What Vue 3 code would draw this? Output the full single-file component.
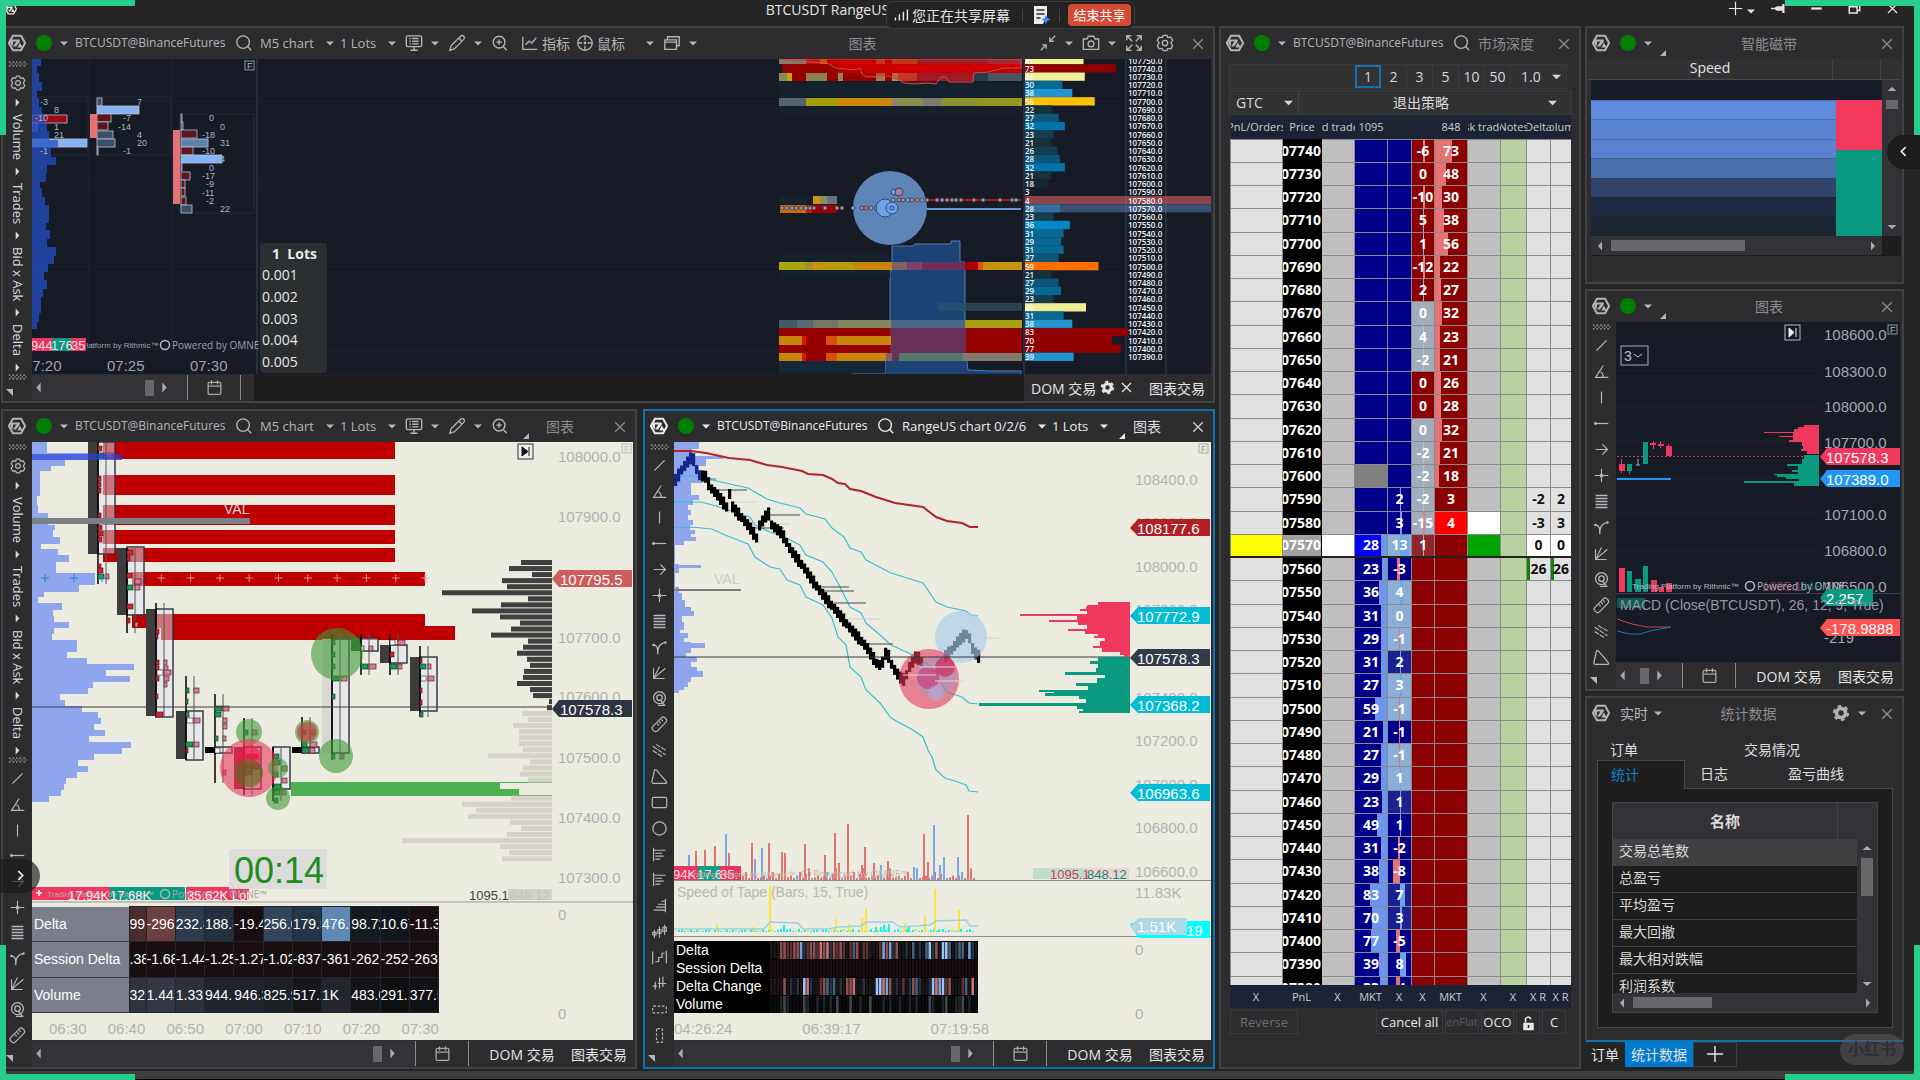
<template>
  <div class="app">
    <svg class="defs" aria-hidden="true">
      <symbol id="i-logo" viewBox="0 0 20 20"><path d="M5.5 2h9L19 10l-4.500 8h-9L1 10z" fill="none" stroke="currentColor" stroke-width="2.2" /><path d="M2 6h3.500v7.500L3 11zM5 6h8v2.200L9 14H5.500L9.500 8.200H5zM13 9.500l3.500 5.500h-6z" fill="currentColor" /></symbol>
      <symbol id="i-caret" viewBox="0 0 10 10"><path d="M0 3h10L5 8z" fill="currentColor" /></symbol>
      <symbol id="i-left" viewBox="0 0 10 10"><path d="M7 .5v9L3 5z" fill="currentColor" /></symbol>
      <symbol id="i-right" viewBox="0 0 10 10"><path d="M3 .5v9L7 5z" fill="currentColor" /></symbol>
      <symbol id="i-up" viewBox="0 0 10 10"><path d="M.5 7h9L5 3z" fill="currentColor" /></symbol>
      <symbol id="i-down" viewBox="0 0 10 10"><path d="M.5 3h9L5 7z" fill="currentColor" /></symbol>
      <symbol id="i-corner" viewBox="0 0 8 8"><path d="M8 0v8H0z" fill="currentColor" /></symbol>
      <symbol id="i-cornerdown" viewBox="0 0 8 8"><path d="M0 0h8v8z" fill="currentColor" /></symbol>
      <symbol id="i-search" viewBox="0 0 20 20"><circle cx="9" cy="9" r="7" fill="none" stroke="currentColor" stroke-width="1.5" /><path d="M14 14l4 4" stroke="currentColor" stroke-width="1.5" /></symbol>
      <symbol id="i-zoom" viewBox="0 0 20 20"><circle cx="9" cy="9" r="6.5" fill="none" stroke="currentColor" stroke-width="1.5" /><path d="M13.5 14l4 4M9 6v6M6 9h6" stroke="currentColor" stroke-width="1.6" /></symbol>
      <symbol id="i-monitor" viewBox="0 0 20 20"><rect x="1.5" y="2" width="17" height="12" rx="1.5" fill="none" stroke="currentColor" stroke-width="1.5" /><path d="M5 5h1.5M8 5h7M5 8h1.5M8 8h7M5 11h1.5M8 11h7M10 14v4M6 18h8" stroke="currentColor" stroke-width="1.5" /></symbol>
      <symbol id="i-pencil" viewBox="0 0 20 20"><path d="M2 18l1.500-5L14 2.500a2 2 0 0 1 3.500 3.500L7 16.500zM12 4.500l3.500 3.500" fill="none" stroke="currentColor" stroke-width="1.4" /></symbol>
      <symbol id="i-line" viewBox="0 0 20 20"><path d="M2 3v14h16M5 12l4-4 3 2 5-6" fill="none" stroke="currentColor" stroke-width="1.5" /></symbol>
      <symbol id="i-target" viewBox="0 0 20 20"><circle cx="10" cy="10" r="8" fill="none" stroke="currentColor" stroke-width="1.5" /><circle cx="10" cy="10" r="1.6" fill="currentColor" /><path d="M10 2v5M10 13v5M2 10h5M13 10h5" stroke="currentColor" stroke-width="1.5" /></symbol>
      <symbol id="i-windows" viewBox="0 0 20 20"><path d="M5 6V3h13v10h-3M2 6.500h13V17H2zM2 9h13" fill="none" stroke="currentColor" stroke-width="1.5" /></symbol>
      <symbol id="i-shrink" viewBox="0 0 20 20"><path d="M18 2l-6 6M12 3.500V8h4.500M2 18l6-6M3.500 12H8v4.500" fill="none" stroke="currentColor" stroke-width="1.5" /></symbol>
      <symbol id="i-expand" viewBox="0 0 20 20"><path d="M2 7V2h5M2 2l6 6M18 7V2h-5M18 2l-6 6M2 13v5h5M2 18l6-6M18 13v5h-5M18 18l-6-6" fill="none" stroke="currentColor" stroke-width="1.6" /></symbol>
      <symbol id="i-camera" viewBox="0 0 20 20"><path d="M1.500 5.500h4l1.500-3h6l1.500 3h4V17h-17z" fill="none" stroke="currentColor" stroke-width="1.5" /><circle cx="10" cy="11" r="3.2" fill="none" stroke="currentColor" stroke-width="1.5" /></symbol>
      <symbol id="i-gear" viewBox="0 0 20 20"><path d="M8 1.500h4l1 2.500 3.500-.5 2 3.500-2 3 2 3-2 3.500-3.500-.5-1 2.500H8L7 16l-3.500.5-2-3.500 2-3-2-3 2-3.500L7 4z" fill="none" stroke="currentColor" stroke-width="1.5" stroke-linejoin="round" /><circle cx="10" cy="10" r="3" fill="none" stroke="currentColor" stroke-width="1.5" /></symbol>
      <symbol id="i-cog" viewBox="0 0 20 20"><circle cx="10" cy="10" r="5" fill="none" stroke="currentColor" stroke-width="4" /><circle cx="10" cy="10" r="7.5" fill="none" stroke="currentColor" stroke-width="3" stroke-dasharray="3.9 3.95" /></symbol>
      <symbol id="i-close" viewBox="0 0 20 20"><path d="M4 4l12 12M16 4L4 16" stroke="currentColor" stroke-width="1.7" /></symbol>
      <symbol id="i-cal" viewBox="0 0 20 20"><rect x="2.5" y="4" width="15" height="14" rx="1.5" fill="none" stroke="currentColor" stroke-width="1.5" /><path d="M2.500 8.500h15M6.500 1.500v5M13.500 1.500v5" stroke="currentColor" stroke-width="1.5" /></symbol>
      <symbol id="i-lock" viewBox="0 0 20 20"><rect x="3" y="9" width="14" height="10" rx="1" fill="currentColor" /><path d="M6 9V5.500a3.500 3.500 0 0 1 7-1" fill="none" stroke="currentColor" stroke-width="2" /><path d="M10 12v4" stroke="#222" stroke-width="2" /></symbol>
      <symbol id="i-plus" viewBox="0 0 20 20"><path d="M10 1v18M1 10h18" stroke="currentColor" stroke-width="1.6" /></symbol>
      <symbol id="i-pin" viewBox="0 0 20 20"><path d="M0 10h7" stroke="currentColor" stroke-width="1.8" /><path d="M5 9l3-2h7V4h3v12h-3v-3H8l-3-2z" fill="currentColor" /></symbol>
      <symbol id="i-min" viewBox="0 0 20 20"><path d="M3 10h14" stroke="currentColor" stroke-width="3" /></symbol>
      <symbol id="i-restore" viewBox="0 0 20 20"><path d="M7 7V3.500h10v9h-3.500M3 7.500h10.500V16H3z" fill="none" stroke="currentColor" stroke-width="2" /></symbol>
      <symbol id="i-note" viewBox="0 0 20 20"><path d="M3 1h13v10l-4 8H3z" fill="#e8ecef" /><path d="M5.500 5h8M5.500 9h8M5.500 13h4" stroke="#2b2b2b" stroke-width="1.6" /><path d="M15 10l1.400 3.100L19.500 14.500l-3.100 1.400L15 19l-1.400-3.100L10.500 14.500l3.100-1.400z" fill="#3d8bff" /></symbol>
      <symbol id="i-signal" viewBox="0 0 20 20"><path d="M3 17v-4M8 17V9M13 17V6M18 17V3" stroke="currentColor" stroke-width="1.8" /></symbol>
      <symbol id="r-trend" viewBox="0 0 20 20"><path d="M4 16L16 4" stroke="currentColor" stroke-width="1.4" /></symbol>
      <symbol id="r-angle" viewBox="0 0 20 20"><path d="M12 3L3 17h15M7 10c3 0 5 3 5 7" fill="none" stroke="currentColor" stroke-width="1.4" /></symbol>
      <symbol id="r-vert" viewBox="0 0 20 20"><path d="M10 3v14" stroke="currentColor" stroke-width="1.4" /></symbol>
      <symbol id="r-horz" viewBox="0 0 20 20"><path d="M2 10h16" stroke="currentColor" stroke-width="1.4" /><circle cx="3" cy="10" r="1.7" fill="currentColor" /></symbol>
      <symbol id="r-arrow" viewBox="0 0 20 20"><path d="M3 10h14M11 4l6 6-6 6" fill="none" stroke="currentColor" stroke-width="1.4" /></symbol>
      <symbol id="r-cross" viewBox="0 0 20 20"><path d="M10 2v16M2 10h16" stroke="currentColor" stroke-width="1.4" /><circle cx="10" cy="10" r="2.2" fill="currentColor" /></symbol>
      <symbol id="r-levels" viewBox="0 0 20 20"><path d="M3 3h14M3 6.500h14M3 10h14M3 13.500h14M3 17h14" stroke="currentColor" stroke-width="1.7" /></symbol>
      <symbol id="r-fork" viewBox="0 0 20 20"><path d="M2 7c5 0 6 3 6 11M8 15c0-7 4-10 9-11" fill="none" stroke="currentColor" stroke-width="1.5" /><circle cx="17" cy="4" r="1.5" fill="currentColor" /><circle cx="3" cy="7" r="1.5" fill="currentColor" /></symbol>
      <symbol id="r-fan" viewBox="0 0 20 20"><path d="M3 5v12h13M3 17L17 5M3 17L10 3" fill="none" stroke="currentColor" stroke-width="1.3" /></symbol>
      <symbol id="r-disc" viewBox="0 0 20 20"><circle cx="10" cy="9" r="7" fill="none" stroke="currentColor" stroke-width="1.5" /><circle cx="10" cy="9" r="3.2" fill="none" stroke="currentColor" stroke-width="1.5" /><path d="M11 12l5 6M8 18h9" stroke="currentColor" stroke-width="1.5" /></symbol>
      <symbol id="r-ruler" viewBox="0 0 20 20"><rect x="6" y="0" width="7.5" height="20" rx="3" transform="rotate(45 10 10)" fill="none" stroke="currentColor" stroke-width="1.4" /><path d="M7 9l2 2M9.500 6.500l2 2M12 4l2 2" stroke="currentColor" stroke-width="1.4" /></symbol>
      <symbol id="r-channel" viewBox="0 0 20 20"><path d="M6 3l12 7M2 5l15 10M2 10l11 7" stroke="currentColor" stroke-width="1.3" stroke-dasharray="6 1" /></symbol>
      <symbol id="r-tri" viewBox="0 0 20 20"><path d="M4 3q1-2 3 0l11 13q1 2-1 2H3q-2 0-2-2z" fill="none" stroke="currentColor" stroke-width="1.4" /></symbol>
      <symbol id="r-rect" viewBox="0 0 20 20"><rect x="1.5" y="4" width="17" height="12" rx="2" fill="none" stroke="currentColor" stroke-width="1.4" /></symbol>
      <symbol id="r-circle" viewBox="0 0 20 20"><circle cx="10" cy="10" r="7.8" fill="none" stroke="currentColor" stroke-width="1.4" /></symbol>
      <symbol id="r-prof" viewBox="0 0 20 20"><path d="M3 2v16M3 5h14M5 8.500h8M5 12h10M5 15.500h6" stroke="currentColor" stroke-width="1.4" /></symbol>
      <symbol id="r-prof2" viewBox="0 0 20 20"><path d="M17 2v16M17 5h-5M17 8.500H8M17 12H6M17 15.500H3" stroke="currentColor" stroke-width="1.4" /></symbol>
      <symbol id="r-candles" viewBox="0 0 20 20"><path d="M4 8v10M10 4v13M16 2v12M2 11h4v3H2zM8 8h4v4H8zM14 5h4v5h-4z" fill="none" stroke="currentColor" stroke-width="1.3" /></symbol>
      <symbol id="r-steps" viewBox="0 0 20 20"><path d="M2 3v15M18 2v15M5 15h4v-5h4V5h3" fill="none" stroke="currentColor" stroke-width="1.4" /></symbol>
      <symbol id="r-ticks" viewBox="0 0 20 20"><path d="M5 8v9M10 3v13M14 2v12M2 13h5M8 10h10" stroke="currentColor" stroke-width="1.4" /></symbol>
      <symbol id="r-dashh" viewBox="0 0 20 20"><rect x="2" y="6" width="16" height="8" rx="1" fill="none" stroke="currentColor" stroke-width="1.4" stroke-dasharray="3 2" /></symbol>
      <symbol id="r-dashv" viewBox="0 0 20 20"><rect x="6.5" y="2" width="7" height="16" rx="1" fill="none" stroke="currentColor" stroke-width="1.4" stroke-dasharray="3 2" /></symbol>
      <symbol id="r-grip" viewBox="0 0 22 6"><path d="M1 1h20M1 5h20" stroke="currentColor" stroke-width="1.3" stroke-dasharray="1.5 2.5" /><path d="M3 3h18" stroke="currentColor" stroke-width="1.3" stroke-dasharray="1.5 2.5" /></symbol>
    </svg>

    <header class="titlebar">
      <svg class="appicon"><use href="#i-logo" /></svg>
      <span class="wintitle">BTCUSDT RangeUS</span>
      <div class="wincontrols">
        <button aria-label="add"><svg><use href="#i-plus" /></svg></button>
        <button class="mini" aria-label="more"><svg><use href="#i-caret" /></svg></button>
        <button v-for="n in ['pin', 'min', 'restore', 'close']" :key="n" :aria-label="n"><svg><use :href="'#i-' + n" /></svg></button>
      </div>
      <div class="share">
        <svg class="signal"><use href="#i-signal" /></svg>
        <span>您正在共享屏幕</span>
        <i></i>
        <svg class="note"><use href="#i-note" /></svg>
        <i></i>
        <button>结束共享</button>
      </div>
    </header>

    <main class="workspace">
      <div class="charts">
        <!-- heatmap chart -->
        <section class="panel wide">
          <header class="head">
            <svg class="logo"><use href="#i-logo" /></svg>
            <span class="dot"></span>
            <svg class="caret"><use href="#i-caret" /></svg>
            <span class="symbol">BTCUSDT@BinanceFutures</span>
            <svg class="ic"><use href="#i-search" /></svg>
            <select class="tf" aria-label="timeframe"><option>M5 chart</option></select>
            <svg class="caret"><use href="#i-caret" /></svg>
            <select class="lots" aria-label="lots"><option>1 Lots</option></select>
            <svg class="caret"><use href="#i-caret" /></svg>
            <svg class="ic"><use href="#i-monitor" /></svg>
            <svg class="caret"><use href="#i-caret" /></svg>
            <svg class="ic"><use href="#i-pencil" /></svg>
            <svg class="caret"><use href="#i-caret" /></svg>
            <svg class="ic"><use href="#i-zoom" /></svg>
            <button class="tool"><svg><use href="#i-line" /></svg>指标</button>
            <button class="tool"><svg><use href="#i-target" /></svg>鼠标</button>
            <svg class="caret far"><use href="#i-caret" /></svg>
            <svg class="ic"><use href="#i-windows" /></svg>
            <svg class="caret"><use href="#i-caret" /></svg>
            <h2>图表</h2>
            <svg class="ic"><use href="#i-shrink" /></svg>
            <svg class="caret"><use href="#i-caret" /></svg>
            <svg class="ic"><use href="#i-camera" /></svg>
            <svg class="caret"><use href="#i-caret" /></svg>
            <svg class="ic"><use href="#i-expand" /></svg>
            <svg class="ic gear"><use href="#i-gear" /></svg>
            <button class="x" aria-label="close"><svg><use href="#i-close" /></svg></button>
          </header>
          <div class="body">
            <nav class="rail">
              <svg class="grip"><use href="#r-grip" /></svg>
              <svg class="railgear"><use href="#i-gear" /></svg>
              <div class="modes">
                <template v-for="m in modes" :key="m">
                  <svg><use href="#i-right" /></svg><span>{{ m }}</span>
                </template>
                <svg><use href="#i-right" /></svg>
              </div>
              <svg class="grip"><use href="#r-grip" /></svg>
              <svg class="fold"><use href="#i-cornerdown" /></svg>
            </nav>
            <div class="chart dark">
              <svg class="plot" viewBox="32 59 1179 315" preserveAspectRatio="xMinYMin slice">
                <path d="M32 101H1126M32 184H1126M32 267H1126M32 350H1126M89 59V352M172 59V352" stroke="#1e2530" />
                <g fill="none" stroke="#242b38"><rect x="24" y="97" width="64" height="58" /><rect x="97" y="97" width="74" height="58" /><rect x="180" y="114" width="74" height="99" /></g>
                <rect v-for="(b, i) in cells" :key="i" :x="b[0]" :y="b[1]" :width="b[2]" height="8" :fill="b[3]" stroke="#b9c0cf" stroke-width=".8" />
                <g fill="#e57373"><rect x="90" y="114" width="7" height="24" /><rect x="173" y="130" width="7" height="74" /></g>
                <path :d="blueProfile" fill="#2450c4" opacity=".75" />
                <text v-for="(t, i) in cellTexts" :key="i" :x="t[0]" :y="t[1]" class="t9" fill="#a9b2c2">{{ t[2] }}</text>
                <rect x="245" y="61" width="9" height="9" fill="none" stroke="#8a93a3" /><text x="247" y="66" class="t9" fill="#a9b2c2">F</text>
                <path d="M257 59V374" stroke="#323846" stroke-width="1.5" />
                <g fill="#9aa3ad"><text x="52" y="345" class="mark">Trading Platform by Rithmic™</text><circle cx="165" cy="345" r="4.5" fill="none" stroke="#b5bcc6" stroke-width="1.5" /><text x="172" y="345" class="mark ui">Powered by OMNE</text></g>
                <rect x="32" y="338" width="20" height="13" fill="#f0365c" /><rect x="52" y="338" width="19" height="13" fill="#089981" /><rect x="71" y="338" width="15" height="13" fill="#f0365c" />
                <g class="t13" fill="#f4dfe6"><text x="31" y="345">944</text><text x="51" y="345">176</text><text x="71" y="345">35</text></g>
                <g class="t15" fill="#9da2ac"><text x="24" y="365">07:20</text><text x="107" y="365">07:25</text><text x="190" y="365">07:30</text></g>

                <path d="M852 374H885V355L890 352V271L892 270V246H913L915 244H951V241H960V262H965V345L968 370L990 371H1021V374" fill="#1f4a82" fill-opacity=".85" stroke="#4f7fb8" />
                <rect x="779" y="82" width="243" height="15" fill="#15222e" /><rect x="779" y="106" width="243" height="8" fill="#161f2a" /><rect x="779" y="361" width="106" height="12" fill="#14283a" /><rect x="779" y="196" width="28" height="8" fill="#14242f" />
                <rect x="779" y="254" width="112" height="8" fill="#15222e" /><rect x="779" y="270" width="111" height="8" fill="#15222e" />
                <template v-for="(r, i) in heat" :key="i">
                  <rect v-for="(s, j) in r.s" :key="j" :x="s[0]" :y="r.y" :width="s[1] - s[0]" :height="r.h" :fill="s[2]" />
                </template>
                <path d="M780 60L827 63L836 68L855 70L860 68L862 74L866 77L890 76L892 78L899 80L904 83L914 84L927 83L936 84L941 77L946 77L949 82L973 82L974 73L988 72L1003 68L1021 68V59H780z" fill="#d80000" fill-opacity=".3" stroke="#d04a50" />
                <path d="M927 200H1021" stroke="#b01820" stroke-width="2" /><path d="M927 209H1021" stroke="#6a96d8" stroke-width="2" />
                <circle cx="890" cy="208" r="37" fill="#7fb2f5" opacity=".7" />
                <circle v-for="(d, i) in tradeDots" :key="i" :cx="d[0]" :cy="d[1]" r="2" :fill="i % 3 ? '#c8848c' : '#86a6d8'" stroke="#303848" stroke-width=".8" />
                <g fill="#6fa0e8" stroke="#2f4a78"><circle cx="885" cy="208" r="9" /><circle cx="892" cy="208" r="6" /><circle cx="892" cy="208" r="2" /><circle cx="894" cy="192" r="3" /><circle cx="899" cy="192" r="4" fill="#b07c94" /></g>

                <path d="M1024 59V374M1126 59V374M1166 59V374" stroke="#3a414e" />
                <g v-for="(r, i) in ladder" :key="r[0]">
                  <rect x="1025" :y="y(i) - 4" :width="r[1] > 4 ? r[1] * 1.245 : 0" height="8.3" :fill="r[2]" />
                </g>
                <rect x="1025" :y="y(17) - 4" width="186" height="8" fill="#c45a60" fill-opacity=".68" /><rect x="1025" :y="y(18) - 4" width="186" height="8" fill="#5d8ac8" fill-opacity=".5" />
                <g v-for="(r, i) in ladder" :key="'t' + r[0]" class="t8" fill="#f2f4f8">
                  <text x="1025" :y="y(i)">{{ r[1] }}</text><text x="1128" :y="y(i)">{{ r[0] }}.0</text>
                </g>
              </svg>
              <div class="lotmenu">
                <b>1&nbsp; Lots</b>
                <button v-for="n in 5" :key="n">0.00{{ n }}</button>
              </div>
            </div>
          </div>
          <footer class="foot">
            <div class="scroll short"><svg><use href="#i-left" /></svg><span></span><svg><use href="#i-right" /></svg></div>
            <button class="cal" aria-label="calendar"><svg><use href="#i-cal" /></svg></button>
            <div class="filler"></div>
            <button class="dom">DOM 交易 <svg><use href="#i-cog" /></svg><svg><use href="#i-close" /></svg></button>
            <button class="trade">图表交易</button>
          </footer>
        </section>

        <!-- footprint chart -->
        <section class="panel">
          <header class="head">
            <svg class="logo"><use href="#i-logo" /></svg>
            <span class="dot"></span>
            <svg class="caret"><use href="#i-caret" /></svg>
            <span class="symbol">BTCUSDT@BinanceFutures</span>
            <svg class="ic"><use href="#i-search" /></svg>
            <select class="tf" aria-label="timeframe"><option>M5 chart</option></select>
            <svg class="caret"><use href="#i-caret" /></svg>
            <select class="lots" aria-label="lots"><option>1 Lots</option></select>
            <svg class="caret"><use href="#i-caret" /></svg>
            <svg class="ic"><use href="#i-monitor" /></svg>
            <svg class="caret"><use href="#i-caret" /></svg>
            <svg class="ic"><use href="#i-pencil" /></svg>
            <svg class="caret"><use href="#i-caret" /></svg>
            <svg class="ic"><use href="#i-zoom" /></svg>
            <svg class="corner"><use href="#i-corner" /></svg>
            <h2>图表</h2>
            <button class="x" aria-label="close"><svg><use href="#i-close" /></svg></button>
          </header>
          <div class="body">
            <nav class="rail">
              <svg class="grip"><use href="#r-grip" /></svg>
              <svg class="railgear"><use href="#i-gear" /></svg>
              <div class="modes">
                <template v-for="m in modes" :key="m">
                  <svg><use href="#i-right" /></svg><span>{{ m }}</span>
                </template>
                <svg><use href="#i-right" /></svg>
              </div>
              <svg class="grip"><use href="#r-grip" /></svg>
              <div class="tools">
                <button v-for="n in rail.slice(0, 11)" :key="n" :aria-label="n"><svg><use :href="'#r-' + n" /></svg></button>
              </div>
              <svg class="fold"><use href="#i-cornerdown" /></svg>
            </nav>
            <div class="chart light">
              <svg class="plot" viewBox="32 442 601 464" preserveAspectRatio="xMinYMin slice">
                <path :d="footProfile" fill="#8fa6ef" />
                <g fill="#c00000">
                  <rect x="103" y="442" width="292" height="17" /><rect x="103" y="475" width="292" height="20" /><rect x="103" y="505" width="292" height="20" /><rect x="103" y="530" width="292" height="14" /><rect x="103" y="548" width="292" height="14" />
                  <rect x="132" y="572" width="293" height="14" /><rect x="132" y="614" width="293" height="14" /><rect x="161" y="626" width="294" height="14" />
                </g>
                <g v-for="(c, i) in candles" :key="i">
                  <rect v-if="c[1]" :x="c[0] - 10" :y="c[1]" width="10" :height="c[2] - c[1]" :fill="c[6] || '#3d3d3d'" />
                  <rect :x="c[0]" :y="c[3]" width="17" :height="c[4] - c[3]" fill="#dfe3f2" fill-opacity=".5" stroke="#2c3040" stroke-width="1.4" />
                  <path :d="`M${c[0]} ${c[5]}V${c[7]}`" stroke="#000" stroke-width="1.5" /><path :d="`M${c[0] + 8} ${c[5]}V${c[7]}`" stroke="#555" />
                </g>
                <rect v-for="(q, i) in prints" :key="'q' + i" :x="q[0]" :y="q[1]" :width="q[3] || 6" height="5" :fill="q[2]" stroke="#2b1b22" stroke-width=".6" />
                <rect x="32" y="454" width="90" height="6" fill="#2a3fd8" opacity=".65" />
                <rect x="32" y="518" width="218" height="6" fill="#7d7f86" /><text x="224" y="509" class="t14" fill="#e6d3dc">VAL</text>
                <path v-for="n in 10" :key="n" :d="`M${132 + n * 29.3 - 4} 578h8m-4-4v8`" stroke="#e58a8a" />
                <path d="M41 578h8m-4-4v8M70 578h8m-4-4v8M98 578h8m-4-4v8" stroke="#2f7bb8" />
                <circle cx="337" cy="654" r="26" fill="#3f9a37" opacity=".6" /><circle cx="336" cy="756" r="17" fill="#3f9a37" opacity=".6" />
                <circle cx="249" cy="732" r="13" fill="#3f9a37" opacity=".6" /><circle cx="307" cy="732" r="12" fill="#3f9a37" opacity=".6" /><circle cx="307" cy="732" r="10" fill="#d0303f" opacity=".6" />
                <circle cx="249" cy="768" r="29" fill="#e8385a" opacity=".6" /><circle cx="249" cy="757" r="12" fill="#f01848" opacity=".6" /><circle cx="249" cy="773" r="14" fill="#5a6a20" opacity=".65" />
                <circle cx="278" cy="768" r="10" fill="#3f9a37" opacity=".55" /><circle cx="278" cy="798" r="12" fill="#3f9a37" opacity=".6" />
                <g fill="#4caf50"><rect x="291" y="782" width="209" height="7" /><rect x="291" y="789" width="228" height="7" /><path d="M500 782h52v1h-52zM519 795h33v1h-33z" /></g>
                <rect v-for="(x, i) in histDark" :key="'d' + i" :x="x" :y="560 + i * 6.05" :width="552 - x" height="5" fill="#404040" />
                <template v-for="(x, i) in histLight" :key="'l' + i"><rect v-if="x" :x="x" :y="711 + i * 6.05" :width="552 - x" height="5" fill="#d5d3c9" /></template>
                <path d="M32 707H552" stroke="#3a3d44" />
                <g class="t15" fill="#b0b0b3"><text v-for="p in [[108000, 456], [107900, 516], [107700, 637], [107600, 696], [107500, 757], [107400, 817], [107300, 877]]" :key="p[0]" x="558" :y="p[1]">{{ p[0] }}.0</text></g>
                <g v-for="t in [[579, '#cd5c5c', '107795.5'], [709, '#2e3441', '107578.3']]" :key="t[0]"><path :d="`M552 ${t[0]}l7-9H632v17H559z`" :fill="t[1]" /><text x="560" :y="t[0]" class="t15" fill="#fff">{{ t[2] }}</text></g>
                <rect x="518" y="444" width="15" height="15" fill="#eee" stroke="#333" /><path d="M522 447v9l6-4.500zM529 447v9" fill="#111" stroke="#111" />
                <rect x="622" y="444" width="9" height="9" fill="none" stroke="#bbb" /><text x="624" y="449" class="t9" fill="#bbb">F</text>
                <rect x="32" y="887" width="78" height="13" fill="#f0365c" /><rect x="110" y="887" width="75" height="13" fill="#089981" /><rect x="186" y="887" width="63" height="13" fill="#f0365c" />
                <path d="M36 893h6m-3-3v6" stroke="#fff" stroke-width="1.5" />
                <text x="47" y="894" class="mark" fill="#b5b0b0">Trading Platform by Rithmic™</text><circle cx="165" cy="894" r="4.5" fill="none" stroke="#a8b5b0" stroke-width="1.5" /><text x="172" y="894" class="mark ui" fill="#a8a8a8">Powered by OMNE™</text>
                <g class="t13" fill="#fbe9ee"><text x="68" y="895">17.94K</text><text x="110" y="895">17.68K</text><text x="187" y="895">35.62K Lot</text></g>
                <rect x="229" y="849" width="98" height="40" fill="#dcdcda" /><text x="234" y="870" class="timer" fill="#228b22">00:14</text>
                <rect x="508" y="889" width="44" height="11" fill="#d0cfc8" /><text x="469" y="895" class="t13" fill="#444">1095.1</text><text x="510" y="895" class="t13" fill="#c2c1ba">848.12</text>
                <path d="M32 902H633" stroke="#98989a" />
              </svg>
              <div class="study">
                <table class="stats">
                  <tbody>
                    <tr v-for="r in footStats" :key="r.n">
                      <th scope="row">{{ r.n }}</th>
                      <td v-for="(v, i) in r.v" :key="i" :style="{ background: r.c[i] }"><div>{{ v }}</div></td>
                    </tr>
                  </tbody>
                </table>
                <div class="zero"><span>0</span><span>0</span></div>
              </div>
              <div class="times foottimes"><span v-for="t in ['06:30', '06:40', '06:50', '07:00', '07:10', '07:20', '07:30']" :key="t">{{ t }}</span></div>
            </div>
          </div>
          <footer class="foot">
            <div class="scroll"><svg><use href="#i-left" /></svg><span></span><svg><use href="#i-right" /></svg></div>
            <button class="cal" aria-label="calendar"><svg><use href="#i-cal" /></svg></button>
            <button class="dom">DOM 交易</button>
            <button class="trade">图表交易</button>
          </footer>
        </section>

        <!-- range chart -->
        <section class="panel focused">
          <header class="head">
            <svg class="logo"><use href="#i-logo" /></svg>
            <span class="dot"></span>
            <svg class="caret"><use href="#i-caret" /></svg>
            <span class="symbol">BTCUSDT@BinanceFutures</span>
            <svg class="ic"><use href="#i-search" /></svg>
            <select class="range" aria-label="timeframe"><option>RangeUS chart 0/2/6</option></select>
            <svg class="caret"><use href="#i-caret" /></svg>
            <select class="lots" aria-label="lots"><option>1 Lots</option></select>
            <svg class="caret"><use href="#i-caret" /></svg>
            <svg class="corner"><use href="#i-corner" /></svg>
            <h2>图表</h2>
            <button class="x" aria-label="close"><svg><use href="#i-close" /></svg></button>
          </header>
          <div class="body">
            <nav class="rail">
              <svg class="grip"><use href="#r-grip" /></svg>
              <div class="tools">
                <button v-for="(n, i) in rail" :key="i" :aria-label="n"><svg><use :href="'#r-' + n" /></svg></button>
              </div>
              <svg class="fold"><use href="#i-cornerdown" /></svg>
            </nav>
            <div class="chart light">
              <svg class="plot" viewBox="674 442 537 499" preserveAspectRatio="xMinYMin slice">
                <path :d="rangeProfile" fill="#8fa6ef" />
                <rect v-for="(b, i) in volumes" :key="'v' + i" :x="b[0]" :y="880 - b[1]" width="2" :height="b[1]" :fill="b[2]" />
                <path v-for="(l, i) in bands" :key="'b' + i" :d="l" fill="none" stroke="#35bfd0" stroke-width="1.2" />
                <path d="M674 451L691 451L706 453L729 458L750 460L767 465L782 467L802 471L808 474L823 475L832 479L838 483L845 484L850 489L861 491L876 497L895 503L923 507L936 517L947 521L962 523L970 527L978 527" fill="none" stroke="#b02428" stroke-width="2" />
                <path d="M674 590H741" stroke="#7b7c80" stroke-width="2" /><text x="714" y="579" class="t14" fill="#cacacc">VAL</text>
                <path d="M712 490H747M770 515H800M755 528H784M819 587H849M823 591H854M834 603H866M861 644H893" stroke="#4b4b4b" />
                <path d="M720 502H755M770 524H790M849 619H880M985 638H1000" stroke="#d2d0c6" />
                <rect v-for="(b, i) in rangeBars" :key="'r' + i" :x="b[0]" :y="b[1]" width="3.2" :height="b[2]" :fill="b[0] < 700 ? '#14288c' : '#000'" />
                <circle cx="961" cy="637" r="26" fill="#a9cdf0" opacity=".65" />
                <circle cx="929" cy="679" r="30" fill="#e63b5a" opacity=".6" /><circle cx="936" cy="677" r="20" fill="#8aa4e0" opacity=".45" /><circle cx="928" cy="678" r="11" fill="#cc2a6a" opacity=".55" /><circle cx="945" cy="667" r="10" fill="#cc2a58" opacity=".7" /><circle cx="936" cy="693" r="8" fill="#a9b8f0" opacity=".4" />
                <path d="M903 675H936M920 667H955M935 681H965" stroke="#f0d0d8" />
                <path d="M674 657H1130" stroke="#33363c" />
                <rect v-for="(h, i) in depthC" :key="'h' + i" :x="h[0]" :y="h[1]" :width="1130 - h[0]" :height="h[2]" :fill="h[1] < 657 ? '#f0385c' : '#0a9a80'" />
                <g class="t15" fill="#b2b3b6"><text v-for="(p, i) in 10" :key="p" x="1135" :y="479 + i * 43.6">{{ 108400 - i * 200 }}.0</text><text x="1135" y="892">11.83K</text></g>
                <g v-for="t in rangeTags" :key="t[0]"><path :d="`M1130 ${t[0]}l8-9H1210v17H1138z`" :fill="t[1]" /><text x="1137" :y="t[0]" class="t15" fill="#fff">{{ t[2] }}</text></g>
                <rect x="1199" y="444" width="9" height="9" fill="none" stroke="#aaa" /><text x="1201" y="449" class="t9" fill="#999">F</text>
                <rect x="674" y="866" width="24" height="14" fill="#e8365c" /><rect x="698" y="866" width="22" height="14" fill="#1a9a80" /><rect x="720" y="866" width="21" height="14" fill="#e8365c" />
                <g class="t13" fill="#f7dbe3"><text x="673" y="874">94K</text><text x="697" y="874">17.6</text><text x="720" y="874">35.</text></g>
                <g fill="#bdbbb6"><text x="689" y="874" class="mark">Trading Platform by Rithmic™</text><circle cx="806" cy="874" r="4.5" fill="none" stroke="#b8b8b4" /><text x="813" y="874" class="mark ui">Powered by OMNE™</text></g>
                <rect x="1033" y="868" width="55" height="11" fill="#c1dccf" /><rect x="1088" y="868" width="41" height="11" fill="#efd3d3" /><g class="t13"><text x="1050" y="874" fill="#d0405c">1095.1</text><text x="1087" y="874" fill="#128a74">848.12</text></g>
                <path d="M674 880.500H1211M674 936.500H1211" stroke="#8d8d90" />
                <text x="677" y="892" class="t14" fill="#b8b8b8">Speed of Tape (Bars, 15, True)</text>
                <rect v-for="(b, i) in speed" :key="'s' + i" :x="b[0]" :y="932 - b[1]" width="2" :height="b[1]" :fill="b[2]" />
                <path d="M674 929H764L770 922L798 923L803 929H828L838 927L861 926L866 922L893 922L900 927L930 925L936 921L966 920L970 926H978" fill="none" stroke="#9fcfe6" stroke-width="1.5" />
                <path d="M1130 924l8-3H1210v17H1138z" fill="#0ff" /><text x="1186" y="930" class="t15" fill="#fff">19</text><path d="M1130 927l8-9H1187v17H1138z" fill="#add8e6" /><text x="1137" y="926" class="t15" fill="#fff">1.51K</text>
              </svg>
              <div class="study narrow">
                <table class="strips">
                  <tbody>
                    <tr v-for="(r, k) in strips" :key="r.n">
                      <th scope="row">{{ r.n }}</th>
                      <td><svg viewBox="0 0 63 1" preserveAspectRatio="none"><rect v-for="(c, i) in r.c" :key="k + '-' + i" :x="i" y="0" width=".8" height="1" :fill="c" /></svg></td>
                    </tr>
                  </tbody>
                </table>
                <div class="zero"><span>0</span><span>0</span></div>
              </div>
              <div class="times rangetimes"><span v-for="t in ['04:26:24', '06:39:17', '07:19:58']" :key="t">{{ t }}</span></div>
            </div>
          </div>
          <footer class="foot">
            <div class="scroll"><svg><use href="#i-left" /></svg><span></span><svg><use href="#i-right" /></svg></div>
            <button class="cal" aria-label="calendar"><svg><use href="#i-cal" /></svg></button>
            <button class="dom">DOM 交易</button>
            <button class="trade">图表交易</button>
          </footer>
        </section>
      </div>

      <!-- market depth -->
      <section class="panel depth">
        <header class="head">
          <svg class="logo"><use href="#i-logo" /></svg>
          <span class="dot"></span>
          <svg class="caret"><use href="#i-caret" /></svg>
          <span class="symbol">BTCUSDT@BinanceFutures</span>
          <svg class="ic"><use href="#i-search" /></svg>
          <h2>市场深度</h2>
          <button class="x" aria-label="close"><svg><use href="#i-close" /></svg></button>
        </header>
        <div class="qty">
          <button v-for="n in [1, 2, 3, 5, 10, 50]" :key="n" :class="{ on: n === 1 }">{{ n }}</button>
          <label class="pick"><select aria-label="volume"><option>1.0</option></select><svg><use href="#i-caret" /></svg></label>
        </div>
        <div class="orders">
          <label class="pick gtc"><select aria-label="time in force"><option>GTC</option></select><svg><use href="#i-caret" /></svg></label>
          <label class="pick exit"><select aria-label="exit strategy"><option>退出策略</option></select><svg><use href="#i-caret" /></svg></label>
        </div>
        <div class="book">
          <table>
            <colgroup><col v-for="(c, i) in domCols" :key="i" :class="'w' + c" /></colgroup>
            <thead>
              <tr><th v-for="(h, i) in domHead" :key="i"><div>{{ h }}</div></th></tr>
            </thead>
            <tbody>
              <tr v-for="r in domRows" :key="r.p" :class="r.k">
                <td class="pnl"></td>
                <td class="price"><div>{{ r.p }}</div></td>
                <td class="traded"></td>
                <td class="bid" :class="{ off: r.p === 107600 }"><i v-if="r.b" :style="{ width: r.b * 0.21 + 'px' }"></i><div>{{ r.b }}</div></td>
                <td class="bd" :class="r.bt"><i v-if="r.bd" :class="{ neg: r.bd < 0 }" :style="{ width: Math.min(Math.abs(r.bd), 12) * 0.8 + 'px' }"></i><div>{{ r.bd }}</div></td>
                <td class="ad" :class="r.at"><i v-if="r.ad" :class="{ neg: r.ad < -5 }"></i><div>{{ r.ad }}</div></td>
                <td class="ask"><i v-if="r.a > 4" :style="{ width: r.a * 0.23 + 'px' }"></i><div>{{ r.a }}</div></td>
                <td class="traded at"></td>
                <td class="notes"></td>
                <td class="delta"><div>{{ r.d }}</div></td>
                <td class="delta"><div>{{ r.v }}</div></td>
              </tr>
            </tbody>
          </table>
        </div>
        <div class="bookfoot"><button v-for="(t, i) in domFoot" :key="i" :class="'w' + domCols[i]">{{ t }}</button></div>
        <div class="actions">
          <button disabled class="reverse">Reverse</button>
          <button class="cancel">Cancel all</button>
          <button disabled class="flat">enFlat</button>
          <button class="oco">OCO</button>
          <button aria-label="lock"><svg><use href="#i-lock" /></svg></button>
          <button>C</button>
        </div>
      </section>

      <div class="side">
        <section class="panel tape">
          <header class="head">
            <svg class="logo"><use href="#i-logo" /></svg>
            <span class="dot"></span>
            <svg class="caret"><use href="#i-caret" /></svg>
            <svg class="corner"><use href="#i-corner" /></svg>
            <h2>智能磁带</h2>
            <button class="x" aria-label="close"><svg><use href="#i-close" /></svg></button>
          </header>
          <div class="tapehead"><span>Speed</span><i></i></div>
          <div class="tapebody">
            <div class="speedcol"><i v-for="(c, i) in ['#181c28', '#5f8bdf', '#5982d0', '#5982d0', '#4a70ab', '#30446b', '#1e2a3f', '#1b242f']" :key="i" :style="{ background: c }"></i></div>
            <div class="sidecol"><i></i><i></i></div>
            <div class="vscroll"><svg><use href="#i-up" /></svg><span></span><svg><use href="#i-down" /></svg></div>
            <div class="hscroll"><svg><use href="#i-left" /></svg><span></span><svg><use href="#i-right" /></svg></div>
          </div>
        </section>

        <section class="panel">
          <header class="head">
            <svg class="logo"><use href="#i-logo" /></svg>
            <span class="dot"></span>
            <svg class="caret"><use href="#i-caret" /></svg>
            <svg class="corner"><use href="#i-corner" /></svg>
            <h2>图表</h2>
            <button class="x" aria-label="close"><svg><use href="#i-close" /></svg></button>
          </header>
          <div class="body">
            <nav class="rail">
              <svg class="grip"><use href="#r-grip" /></svg>
              <div class="tools">
                <button v-for="n in rail.slice(0, 13)" :key="n" :aria-label="n"><svg><use :href="'#r-' + n" /></svg></button>
              </div>
              <svg class="fold"><use href="#i-cornerdown" /></svg>
            </nav>
            <div class="chart dark">
              <svg class="plot" viewBox="1616 322 284 340" preserveAspectRatio="xMinYMin slice">
                <path d="M1616 371H1820M1616 406H1820M1616 442H1820M1616 478H1820M1616 514H1820M1616 550H1820" stroke="#1f2530" />
                <path d="M1617 456.500H1820" stroke="#c23c62" stroke-dasharray="2 2" />
                <path d="M1617 479H1671" stroke="#2196f3" stroke-width="2" />
                <g fill="#f0385c"><path d="M1619 464h6v7h-6zM1621 459h1v14h-1zM1666 446h6v10h-6zM1668 444h1v3h-1zM1650 443h6v2h-6zM1653 441h1v8h-1zM1658 444h6v2h-6zM1660 441h1v7h-1z" /><path d="M1619 568h6v24h-6zM1651 580h6v12h-6zM1659 587h5v5h-5zM1666 583h6v9h-6z" /></g>
                <g fill="#0a9a80"><path d="M1627 464h5v7h-5zM1629 464h1v10h-1zM1643 442h5v22h-5z" /><path d="M1627 571h5v21h-5zM1635 579h6v13h-6zM1643 566h5v26h-5z" /><path d="M1617 598h28v10h-28z" opacity=".5" /></g>
                <path d="M1638 459v6M1636 465h4" stroke="#aaa" />
                <rect v-for="(h, i) in depthR" :key="i" :x="h[0]" :y="h[1]" :width="1819 - h[0]" :height="h[2]" :fill="h[1] < 455 ? '#f0385c' : '#0a9a80'" />
                <text x="1762" y="586" class="t13" fill="#8a3450">1095.1</text><text x="1800" y="586" class="t13" fill="#0d5f55">848</text>
                <path d="M1616 593.500H1900" stroke="#3a404b" />
                <g class="t15" fill="#a3a7b0"><text v-for="p in [[108600, 334], [108300, 371], [108000, 406], [107700, 442], [107100, 514], [106800, 550], [106500, 586]]" :key="p[0]" x="1824" :y="p[1]">{{ p[0] }}.0</text><text x="1824" y="637">-219</text></g>
                <g fill="#b4bac4"><text x="1632" y="586" class="mark">Trading Platform by Rithmic™</text><circle cx="1750" cy="586" r="4.5" fill="none" stroke="#b5bcc6" stroke-width="1.5" /><text x="1757" y="586" class="mark ui">Powered by OMNE</text></g>
                <g v-for="t in [[457, '#f0385c', '107578.3', 1900], [479, '#2196f3', '107389.0', 1900], [598, '#0a9a80', '2.257', 1873], [628, '#ff5252', '-178.9888', 1900]]" :key="t[0]"><path :d="`M1820 ${t[0]}l7-9H${t[3]}v17H1827z`" :fill="t[1]" /><text x="1826" :y="t[0]" class="t15" fill="#fff">{{ t[2] }}</text></g>
                <text x="1620" y="605" class="t14" fill="#9297a2">MACD (Close(BTCUSDT), 26, 12, 9, True)</text>
                <path d="M1617 619L1632 624L1647 627H1671" fill="none" stroke="#c84848" /><path d="M1617 631L1630 634L1640 634L1650 631L1671 627" fill="none" stroke="#2474c0" />
                <rect x="1785" y="325" width="15" height="15" fill="none" stroke="#b5bcc6" /><path d="M1789 328v9l5-4.500zM1796 328v9" fill="#eee" stroke="#eee" />
                <rect x="1888" y="325" width="9" height="9" fill="none" stroke="#8a93a3" /><text x="1890" y="330" class="t9" fill="#a9b2c2">F</text>
                <rect x="1621" y="346" width="27" height="19" fill="none" stroke="#a4aab4" /><text x="1624" y="356" class="t14" fill="#c0c5ce">3</text><path d="M1634 354l4 3 4-3" fill="none" stroke="#c0c5ce" />
              </svg>
            </div>
          </div>
          <footer class="foot">
            <div class="scroll"><svg><use href="#i-left" /></svg><span></span><svg><use href="#i-right" /></svg></div>
            <button class="cal" aria-label="calendar"><svg><use href="#i-cal" /></svg></button>
            <button class="dom">DOM 交易</button>
            <button class="trade">图表交易</button>
          </footer>
        </section>

        <div class="dock">
          <section class="panel statpanel">
            <header class="head">
              <svg class="logo"><use href="#i-logo" /></svg>
              <span class="live">实时</span>
              <svg class="caret"><use href="#i-caret" /></svg>
              <h2>统计数据</h2>
              <svg class="ic"><use href="#i-cog" /></svg>
              <svg class="caret"><use href="#i-caret" /></svg>
              <button class="x" aria-label="close"><svg><use href="#i-close" /></svg></button>
            </header>
            <div class="tabs top"><button>订单</button><button>交易情况</button></div>
            <div class="tabs"><button class="on">统计</button><button>日志</button><button>盈亏曲线</button></div>
            <div class="tabbody">
              <div class="grid">
                <table>
                  <thead><tr><th>名称</th><th></th></tr></thead>
                  <tbody><tr v-for="(n, i) in names" :key="n" :class="{ sel: i === 0 }"><td colspan="2">{{ n }}</td></tr></tbody>
                </table>
                <div class="vscroll"><svg><use href="#i-up" /></svg><span></span><svg><use href="#i-down" /></svg></div>
                <div class="hscroll"><svg><use href="#i-left" /></svg><span></span><svg><use href="#i-right" /></svg></div>
              </div>
            </div>
          </section>
          <div class="docktabs">
            <button>订单</button><button class="on">统计数据</button><button class="add" aria-label="add"><svg><use href="#i-plus" /></svg></button>
          </div>
          <span class="badge">小红书</span>
        </div>
      </div>
    </main>
    <div class="strip"></div>

    <i class="mk tl"></i><i class="mk tr"></i><i class="mk bl"></i><i class="mk br"></i>
    <button class="pull left" aria-label="open left"><svg viewBox="0 0 10 10"><path d="M3 1l4 4-4 4" fill="none" stroke="currentColor" stroke-width="1.5" /></svg></button>
    <button class="pull right" aria-label="open right"><svg viewBox="0 0 10 10"><path d="M7 1L3 5l4 4" fill="none" stroke="currentColor" stroke-width="1.5" /></svg></button>
  </div>
</template>

<script setup>
const modes = ['Volume', 'Trades', 'Bid x Ask', 'Delta']
const rail = ['trend', 'angle', 'vert', 'horz', 'arrow', 'cross', 'levels', 'fork', 'fan', 'disc', 'ruler', 'channel', 'tri', 'rect', 'circle', 'prof', 'prof', 'prof2', 'candles', 'steps', 'ticks', 'dashh', 'dashv']
const names = ['交易总笔数', '总盈亏', '平均盈亏', '最大回撤', '最大相对跌幅', '利润系数']

// stepped silhouette from [top, right edge] pairs, last pair closes it
function profile(left, pts) {
  let d = `M${left} ${pts[0][0]}`
  pts.forEach(([top, right], i) => {
    const bottom = i < pts.length - 1 ? pts[i + 1][0] : top
    d += `H${right}V${bottom}`
  })
  return d + `H${left}z`
}

const blueProfile = profile(32, [[59, 41], [66, 37], [73, 39], [82, 42], [91, 37], [98, 39], [107, 42], [115, 45], [123, 47], [131, 49], [140, 58], [147, 51], [157, 56], [165, 47], [173, 46], [182, 40], [188, 42], [197, 45], [205, 49], [223, 46], [230, 50], [239, 47], [247, 56], [256, 54], [264, 48], [272, 44], [280, 47], [289, 43], [297, 41], [313, 39], [322, 37], [329, 32]])

const footProfile = profile(32, [[442, 47], [453, 122], [460, 65], [466, 51], [471, 40], [496, 37], [505, 38], [513, 48], [525, 55], [530, 53], [537, 60], [544, 41], [549, 58], [555, 69], [562, 56], [573, 95], [585, 79], [592, 44], [597, 38], [603, 62], [610, 53], [616, 54], [622, 69], [628, 54], [634, 52], [640, 77], [652, 67], [658, 87], [664, 134], [670, 106], [676, 130], [682, 93], [688, 88], [694, 60], [700, 65], [706, 82], [712, 98], [718, 101], [724, 94], [730, 105], [736, 89], [742, 131], [748, 122], [754, 94], [760, 78], [766, 88], [772, 77], [778, 66], [784, 64], [790, 61], [796, 49], [802, 32]])

const rangeProfile = profile(674, [[442, 699], [449, 692], [456, 723], [459, 706], [466, 699], [472, 706], [478, 716], [480, 703], [483, 691], [495, 699], [500, 693], [505, 688], [510, 691], [515, 688], [520, 693], [525, 690], [530, 695], [534, 691], [537, 696], [541, 684], [545, 675], [564, 679], [565, 701], [568, 679], [573, 675], [587, 679], [593, 682], [600, 685], [607, 691], [611, 694], [616, 682], [622, 684], [630, 680], [633, 688], [638, 684], [642, 691], [643, 705], [648, 691], [653, 686], [657, 697], [662, 691], [667, 697], [671, 703], [677, 691], [682, 688], [687, 684], [690, 679], [693, 674]])

const red = '#5e1720'
const slate = '#3b4f68'
const sky = '#84b4f3'
const cells = [
  [32, 115, 35, '#980c12'], [32, 123, 5, '#2c4488'], [32, 139, 55, sky],
  [97, 98, 5, slate], [97, 106, 42, sky], [97, 114, 14, red], [97, 122, 11, red], [97, 131, 16, slate], [97, 139, 18, slate], [97, 147, 1, slate],
  [181, 114, 1, slate], [181, 122, 2, slate], [181, 130, 16, red], [181, 139, 27, '#5d80ae'], [181, 147, 12, red], [181, 155, 41, sky], [181, 163, 1, slate],
  [181, 172, 9, red], [181, 180, 4, red], [181, 188, 4, red], [181, 197, 5, red], [181, 205, 11, slate]
]
const cellTexts = [
  [40, 102, '-3'], [54, 110, '8'], [35, 118, '-10'], [54, 127, '1'], [54, 135, '21'], [58, 143, '3'], [40, 151, '-1'],
  [137, 102, '7'], [134, 110, '1'], [123, 118, '-7'], [118, 127, '-14'], [137, 135, '4'], [137, 143, '20'], [123, 151, '-1'],
  [209, 118, '0'], [220, 127, '0'], [202, 135, '-18'], [220, 143, '31'], [202, 151, '-10'], [220, 159, '4'], [209, 168, '0'],
  [202, 176, '-17'], [206, 184, '-9'], [202, 193, '-11'], [206, 201, '-2'], [220, 209, '22']
]

const dr = '#950000'
const am = '#c8860c'
const pl = '#6a3058'
const heat = [
  { y: 59, h: 5, s: [[779, 806, '#7f7f70'], [806, 820, '#c81010'], [820, 827, '#e06a10'], [827, 876, '#c80000'], [876, 885, '#c4502a'], [885, 892, '#c80000'], [892, 917, '#c05020'], [917, 988, '#8e2a38'], [988, 1022, '#933c48']] },
  { y: 64, h: 9, s: [[782, 838, dr], [838, 892, '#c00000'], [892, 1022, '#c80000']] },
  { y: 73, h: 8, s: [[779, 787, '#8a8a55'], [787, 792, '#c8a010'], [792, 806, dr], [806, 827, '#8a8050'], [827, 838, dr], [838, 843, '#8a8a55'], [843, 876, dr], [876, 885, '#9a8050'], [885, 892, dr], [892, 898, '#9a9a50'], [898, 917, '#b85030'], [917, 974, '#8a2430'], [974, 988, '#263f50'], [988, 1022, '#485664']] },
  { y: 98, h: 8, s: [[779, 806, '#566470'], [806, 838, '#a09c10'], [838, 892, am], [892, 899, '#8a8470'], [899, 922, '#85904a'], [922, 942, '#7c7c70'], [942, 978, '#8f9030'], [978, 1022, '#959620']] },
  { y: 196, h: 8, s: [[813, 820, '#c8960c'], [820, 827, '#8a9060'], [827, 837, '#6a7480']] },
  { y: 205, h: 8, s: [[780, 806, '#c8700c'], [806, 812, '#c81818'], [812, 837, '#a00000']] },
  { y: 262, h: 8, s: [[779, 806, '#a8a416'], [806, 813, '#a09030'], [813, 821, '#c89010'], [821, 853, '#b89a12'], [853, 892, am], [892, 907, '#7c6460'], [907, 922, '#7a4070'], [922, 965, pl], [965, 978, '#a80000'], [978, 983, '#e05010'], [983, 1022, '#c8920c']] },
  { y: 303, h: 8, s: [[938, 966, '#264e70'], [966, 1022, '#28424f']] },
  { y: 320, h: 8, s: [[779, 797, '#415866'], [797, 813, '#5a6872'], [813, 838, '#787468'], [838, 891, '#858660'], [891, 965, '#4c668a'], [965, 1022, '#a8a012']] },
  { y: 328, h: 8, s: [[779, 890, dr], [890, 966, pl], [966, 1022, dr]] },
  { y: 336, h: 9, s: [[779, 802, am], [802, 806, '#e01010'], [806, 826, dr], [826, 837, '#d85010'], [837, 891, am], [891, 966, pl], [966, 1022, dr]] },
  { y: 345, h: 8, s: [[779, 890, dr], [890, 966, pl], [966, 1022, dr]] },
  { y: 353, h: 8, s: [[779, 802, am], [802, 806, '#e01010'], [806, 826, dr], [826, 837, '#d85010'], [837, 886, am], [886, 892, '#7a6070'], [892, 899, pl], [899, 963, '#527868'], [963, 1022, '#807868']] }
]

const tradeDots = [
  ...[893, 899, 903, 908, 912, 917, 922, 927, 937, 942, 947, 952, 956, 961, 974, 983, 1000, 1012, 1016].map((x) => [x, 200]),
  ...[782, 787, 792, 796, 801, 806, 810, 814, 825, 837, 842, 853, 862, 866, 871, 876].map((x) => [x, 208])
]

const y = (i) => 60 + i * 8.24
const ladderVals = [47, 73, 48, 30, 38, 56, 22, 27, 32, 23, 21, 26, 28, 32, 21, 18, 3, 4, 28, 23, 36, 31, 29, 31, 27, 59, 21, 27, 29, 23, 49, 31, 38, 83, 70, 77, 39]
function heatColor(v) {
  if (v >= 70) return '#900000'
  if (v > 57) return '#ff6f00'
  if (v > 50) return '#ffc107'
  if (v > 40) return '#f0ef98'
  if (v > 36) return '#2196d3'
  if (v > 34) return '#0288c7'
  if (v > 31) return '#0274ab'
  if (v > 28) return '#086894'
  if (v > 26) return '#0e5679'
  if (v > 22) return '#153d50'
  return v > 20 ? '#17303d' : '#172630'
}
// the first row is half hidden above the plot
const ladder = ladderVals.map((v, i) => [107750 - i * 10, v, heatColor(v)])

// [x, bar top, bar bottom, box top, box bottom, wick top, bar colour, wick bottom]
const candles = [
  [98, 442, 554, 442, 554, 442, '', 584], [127, 548, 615, 547, 615, 548, '', 633], [156, 609, 716, 609, 717, 603, '', 717], [186, 711, 759, 711, 760, 676, '', 760],
  [215, 747, 753, 747, 753, 694, '#000', 783], [244, 747, 789, 747, 789, 718, '#8d2038', 795], [273, 0, 0, 747, 789, 747, '', 801], [302, 747, 753, 747, 753, 717, '#000', 753],
  [332, 639, 753, 639, 753, 634, '#d8d8d0', 760], [361, 638, 651, 638, 651, 634, '#2f5f30', 675], [390, 645, 663, 645, 663, 634, '', 675], [420, 657, 711, 657, 711, 646, '', 717]
]
const R = '#d8202c'
const G = '#10a050'
const P = '#e07c96'
const prints = [
  [98, 446, R, 4], [98, 453, '#108a90'], [106, 453, P, 7], [98, 476, R, 3], [98, 482, R, 3], [98, 488, R, 3], [98, 513, R, 3], [98, 525, R, 4], [98, 531, R, 5], [98, 537, R, 4], [98, 564, R, 3], [98, 568, R, 5], [98, 574, G], [106, 574, P, 3],
  [127, 550, R], [127, 556, R, 3], [127, 573, R, 5], [135, 579, P], [127, 585, G], [135, 585, P, 5], [127, 604, R], [127, 618, R, 3], [135, 622, P, 3],
  [156, 629, R, 3], [156, 634, R, 2], [156, 660, R, 3], [164, 660, P, 3], [156, 666, R, 3], [164, 666, P, 4], [157, 670, '#fff'], [164, 670, P, 7], [156, 676, R, 3], [164, 676, P, 5], [164, 682, P, 3], [156, 694, R, 2], [156, 712, R, 7],
  [186, 688, G, 3], [194, 688, P, 5], [186, 699, G, 2], [186, 712, G, 3], [187, 718, '#fff'], [194, 718, P], [186, 742, G, 7], [194, 742, P, 5], [186, 748, R, 2],
  [215, 706, G, 7], [223, 706, P], [215, 712, G], [223, 718, P, 4], [223, 724, P, 4], [215, 736, G, 3], [223, 736, P, 3], [215, 748, '#fff', 5], [223, 770, P, 3],
  [244, 730, G, 4], [252, 730, P, 5], [244, 754, '#d01848', 14], [244, 764, '#a02838', 16], [244, 770, '#60602a', 8], [274, 754, G, 5], [274, 760, G, 6], [282, 766, P, 5], [274, 772, G, 4], [282, 778, P, 5], [274, 784, G, 7], [274, 790, G, 6], [282, 790, P, 4], [274, 798, G, 4],
  [302, 730, R, 4], [310, 730, P, 5], [302, 742, G, 5], [310, 742, P, 7], [302, 748, G, 7], [310, 748, P, 5],
  [332, 640, G, 3], [332, 652, G, 3], [332, 664, G, 3], [332, 676, G, 7], [341, 676, P], [332, 694, G, 3], [332, 754, G, 3], [341, 754, P, 3],
  [361, 646, '#dbe', 3], [369, 646, P, 4], [361, 664, G, 7], [369, 664, P, 7], [390, 640, '#fff', 5], [398, 640, P, 7], [390, 652, R, 4], [390, 664, G, 7], [398, 664, P, 4],
  [420, 658, R, 2], [420, 664, G], [428, 664, P, 3], [421, 676, '#fff', 5], [428, 676, P, 6], [420, 688, R, 2], [420, 700, R, 2], [420, 712, G, 3]
]

const histDark = [521, 509, 532, 502, 507, 442, 528, 501, 472, 500, 520, 511, 491, 528, 523, 517, 527, 530, 524, 523, 517, 530, 533, 549, 547]
const histLight = [522, 528, 513, 519, 519, 519, 523, 488, 530, 523, 520, 528, 0, 0, 511, 462, 476, 468, 510, 521, 507, 402, 500, 509, 502]

const footStats = [
  { n: 'Delta', v: ['99.', '-296.', '232.8', '188.8', '-19.4', '256.0', '179.5', '476.0', '98.72', '10.67', '-11.3'], c: ['#4a2c2c', '#6c4040', '#2c3a4c', '#24303f', '#180e10', '#33455a', '#253545', '#6088b2', '#141c22', '#10181e', '#1a1012'] },
  { n: 'Session Delta', v: ['.38', '-1.68', '-1.44', '-1.25', '-1.27', '-1.02', '-837.', '-361.', '-262.', '-252.', '-263.'], c: Array(11).fill('#190f11') },
  { n: 'Volume', v: ['32', '1.44', '1.33', '944.1', '946.3', '825.9', '517.2', '1K', '483.0', '291.1', '377.5'], c: ['#30343f', '#333844', '#2d313b', '#20242c', '#20242c', '#1c2027', '#15171b', '#23262d', '#131417', '#0e0f11', '#111215'] }
]

const bands = [
  'M674 476L695 476L721 482L748 488L767 499L780 503L800 508L806 514L825 519L832 528L844 537L850 548L861 552L866 560L891 573L923 583L936 602L947 607L966 611L970 615L978 616',
  'M674 502L701 502L716 506L725 509L750 517L755 525L770 532L782 536L800 545L806 555L823 562L832 572L840 587L850 607L861 613L866 623L880 635L891 645L913 655L932 667L947 692L962 697L969 703L978 704',
  'M674 528L691 527L712 529L725 535L748 544L755 557L770 567L780 569L787 580L800 585L806 597L823 605L832 618L838 637L846 645L850 667L861 677L866 690L880 703L891 718L913 730L923 737L928 750L932 757L936 770L945 778L958 782L966 785L969 791L978 792'
]

const pricePath = [[674, 480], [680, 470], [686, 462], [691, 456], [694, 467], [697, 475], [705, 477], [708, 487], [716, 495], [725, 507], [728, 494], [731, 507], [748, 527], [755, 538], [757, 527], [765, 515], [769, 513], [770, 525], [780, 533], [789, 550], [802, 567], [812, 582], [823, 597], [834, 610], [850, 630], [865, 647], [876, 665], [880, 665], [885, 651], [891, 667], [898, 677], [903, 680], [908, 667], [915, 656], [921, 663]]
const tailPath = [[944, 656], [950, 650], [956, 642], [963, 635], [967, 634], [970, 647], [975, 655], [978, 657]]
function walk(path) {
  const out = []
  for (let x = path[0][0]; x <= path[path.length - 1][0]; x += 3) {
    const k = Math.max(1, path.findIndex((p) => p[0] >= x))
    const [x0, y0] = path[k - 1]
    const [x1, y1] = path[k]
    const mid = y0 + ((y1 - y0) * (x - x0)) / (x1 - x0)
    const len = 9 + ((x * 7) % 5)
    out.push([x, mid - len / 2, len])
  }
  return out
}
const rangeBars = [...walk(pricePath), ...walk(tailPath)]

const blue = '#7ea6e6'
const coral = '#e0736e'
const volumes = [
  ...Array.from({ length: 100 }, (_, i) => [676 + i * 3, 2 + ((i * 37) % 9) * ((i * 13) % 3) * 0.6, i % 5 ? coral : blue]),
  [688, 25, blue], [695, 29, coral], [704, 30, coral], [714, 34, coral], [725, 46, blue], [728, 27, coral], [751, 37, coral], [754, 21, blue], [761, 32, blue], [768, 37, coral],
  [781, 28, coral], [784, 27, coral], [804, 36, coral], [824, 25, coral], [834, 47, coral], [838, 17, coral], [847, 56, coral], [861, 15, coral], [864, 33, coral], [873, 17, coral], [880, 15, blue], [887, 19, coral],
  [913, 13, blue], [923, 46, coral], [927, 18, coral], [933, 55, blue], [939, 15, blue], [943, 23, blue], [957, 23, blue], [967, 65, coral]
]
const speed = [
  ...Array.from({ length: 100 }, (_, i) => [675 + i * 3, 1 + ((i * 7) % 3), i % 4 ? '#18f0f0' : '#f2e23c']),
  ...[[769, 46], [934, 43], [716, 8], [752, 5], [835, 13], [848, 8], [861, 14], [865, 23], [904, 9], [924, 16], [958, 22]].map((b) => [...b, '#fbe637']),
  ...[[783, 7], [875, 5], [880, 5], [883, 7], [888, 8], [908, 5], [938, 3]].map((b) => [...b, '#10f4f4'])
]

const depthC = [
  [1098, 602, 3], [1087, 605, 2], [1086, 607, 2], [1080, 609, 2], [1087, 611, 3], [1020, 614, 2], [1077, 616, 4], [1049, 620, 2], [1078, 622, 3], [1087, 625, 4], [1068, 629, 2], [1085, 631, 3], [1098, 634, 2], [1094, 636, 2], [1105, 638, 3], [1100, 641, 5], [1093, 646, 2], [1102, 648, 4], [1120, 652, 3], [1124, 655, 2],
  [1098, 657, 4], [1090, 661, 3], [1098, 664, 4], [1096, 668, 4], [1065, 672, 3], [1105, 675, 3], [1097, 678, 5], [1076, 683, 3], [1088, 686, 4], [1039, 690, 2], [1054, 692, 1], [1045, 693, 3], [1079, 696, 3], [1086, 699, 4], [979, 703, 3], [1077, 706, 3], [1083, 709, 2], [1079, 711, 2]
]
const depthR = [
  [1804, 425, 2], [1798, 427, 2], [1794, 429, 3], [1764, 432, 1], [1793, 433, 3], [1779, 436, 1], [1793, 437, 3], [1789, 440, 2], [1802, 442, 4], [1803, 446, 3], [1801, 449, 2], [1807, 451, 3],
  [1804, 455, 4], [1802, 459, 5], [1787, 464, 2], [1798, 466, 4], [1792, 470, 2], [1798, 472, 2], [1774, 474, 1], [1777, 475, 2], [1786, 477, 2], [1799, 479, 2], [1744, 481, 2], [1794, 483, 3]
]
const rangeTags = [[528, '#b02024', '108177.6'], [616, '#00bcd4', '107772.9'], [658, '#333a48', '107578.3'], [705, '#00bcd4', '107368.2'], [793, '#00bcd4', '106963.6']]

// each letter is one bar of the study, looked up in the shade table
const shades = { '.': '#14171c', d: '#1f1618', r: '#5c3434', R: '#8e5050', Q: '#c87474', s: '#263442', b: '#46607e', B: '#7ba2d8', W: '#9cc4f8', v: '#0b0c0e', g: '#22242a', G: '#44464e' }
const cellsOf = (s) => s.split('').map((c) => shades[c])
const strips = [
  { n: 'Delta', c: cellsOf('dddRRrrRRBsrRRrQRQsRrRrdrbRdrrd.drBRBsR.dsdb.s.bWsR.WWb.sbb.Bs.') },
  { n: 'Session Delta', c: Array(63).fill('#1a0e10') },
  { n: 'Delta Change', c: cellsOf('ddddR.sdsdWQs.drRbsb.sdRRQ.ds.d.WWQBRdsdr.sRbs.dsWQBWrRd.drb.Q.') },
  { n: 'Volume', c: cellsOf('vvvgGgvvvvGgvvgvgvgvGvvvGvvgvvGvvvgvgvvgvvgvgvvvGgvvgGvvggGvgvv') }
]

const domCols = [52, 39, 33, 33, 24, 23, 33, 33, 26, 24, 21]
const domHead = ['PnL/Orders', 'Price', 'Bid trades', '1095', '', '', '848', 'Ask trades', 'Notes', 'Delta', 'Volume']
const domFoot = ['X', 'PnL', 'X', 'MKT', 'X', 'X', 'MKT', 'X', 'X', 'X R', 'X R']
const asks = [[-6, 73], [0, 48], [-10, 30], [5, 38], [1, 56], [-12, 22], [2, 27], [0, 32], [4, 23], [-2, 21], [0, 26], [0, 28], [0, 32], [-2, 21], [-2, 18], [-2, 3], [-15, 4]]
const bids = [[28, 13], [23, -3], [36, 4], [31, 0], [29, -1], [31, 2], [27, 3], [59, -1], [21, -1], [27, -1], [29, 1], [23, 1], [49, 1], [31, -2], [38, -8], [83, 7], [70, 3], [77, -5], [39, 8], [33, -4]]
const greyAsk = [7, 8, 9, 12, 13, 14, 15, 16]
const paleBid = [0, 2, 3, 4, 6, 7, 9, 10]
const midBid = [5, 11, 15, 16]
const domRows = [
  ...asks.map(([ad, a], i) => ({
    p: 107740 - i * 10,
    ad,
    a,
    at: greyAsk.includes(i) ? 'grey' : '',
    bd: i === 15 ? 2 : i === 16 ? 3 : null,
    d: i === 15 ? -2 : i === 16 ? -3 : null,
    v: i === 15 ? 2 : i === 16 ? 3 : null,
    k: i === 16 ? 'best' : ''
  })),
  ...bids.map(([b, bd], i) => ({
    p: 107570 - i * 10,
    b,
    bd,
    bt: paleBid.includes(i) ? 'pale' : midBid.includes(i) ? 'mid' : '',
    ad: i === 0 ? 1 : null,
    d: i === 0 ? 0 : i === 1 ? 26 : null,
    v: i === 0 ? 0 : i === 1 ? 26 : null,
    k: i === 0 ? 'last' : i === 1 ? 'hit' : ''
  }))
]
</script>

<style>
body {
  margin: 0;
  background: #252525;
}
</style>

<style scoped>
.app {
  position: relative;
  display: flex;
  flex-direction: column;
  height: 100vh;
  min-height: 900px;
  overflow: hidden;
  background: #252526;
  color: #b4b4b4;
  font-family: 'Open Sans', 'Noto Sans CJK SC', sans-serif;
  font-size: 13px;
}

* {
  box-sizing: border-box;
}

.defs {
  position: absolute;
  width: 0;
  height: 0;
}

button,
select {
  padding: 0;
  border: 0;
  background: none;
  color: inherit;
  font: inherit;
  appearance: none;
}

.titlebar {
  display: flex;
  flex: none;
  height: 26px;
  padding-bottom: 8px;
  align-items: center;
  color: #e6e6e6;
}

.appicon {
  width: 12px;
  height: 12px;
  margin-left: 5px;
}

.wintitle {
  flex: 1;
  padding-left: 39%;
  font-size: 14px;
}

.wincontrols {
  display: flex;
  align-items: center;
  margin-right: 9px;
}

.wincontrols button {
  width: 38px;
  height: 16px;
}

.wincontrols button:first-child {
  width: 16px;
}

.wincontrols .mini {
  width: 16px;
}

.wincontrols svg {
  width: 15px;
  height: 15px;
}

.wincontrols .mini svg {
  width: 8px;
  height: 8px;
}

.share {
  position: absolute;
  top: 1px;
  left: 886px;
  display: flex;
  align-items: center;
  width: 249px;
  height: 28px;
  padding: 0 3px 0 6px;
  border: 1px solid #3a3a3a;
  border-radius: 7px;
  background: #232323;
  font-size: 14px;
  white-space: nowrap;
  z-index: 3;
}

.share svg,
.share button {
  flex: none;
}

.share span {
  flex: 1;
}

.share i {
  width: 1px;
  height: 13px;
  margin: 0 8px;
  background: #444;
}

.signal {
  width: 16px;
  height: 16px;
  margin-right: 3px;
}

.note {
  width: 20px;
  height: 20px;
}

.share button {
  width: 63px;
  height: 22px;
  border-radius: 4px;
  background: #d34b37;
  color: #fff;
  font-size: 13px;
  line-height: 20px;
}

.workspace {
  display: grid;
  flex: 1;
  grid-template-columns: minmax(0, 1214fr) minmax(0, 362fr) minmax(0, 319fr);
  gap: 4px;
  min-height: 0;
  padding: 0 16px 0 1px;
}

.charts {
  display: grid;
  grid-template-rows: minmax(0, 377fr) minmax(0, 660fr);
  grid-template-columns: minmax(0, 636fr) minmax(0, 572fr);
  gap: 6px;
  min-height: 0;
}

.wide {
  grid-column: 1 / 3;
}

.side {
  display: grid;
  grid-template-rows: minmax(0, 258fr) minmax(0, 402fr) minmax(0, 373fr);
  gap: 5px;
  min-height: 0;
}

.panel {
  display: flex;
  flex-direction: column;
  min-height: 0;
  min-width: 0;
  border: 2px solid #424244;
  background: #2d2d30;
}

.focused {
  border-color: #0d74b4;
}

.head {
  display: flex;
  flex: none;
  align-items: center;
  height: 31px;
  padding-bottom: 2px;
}

.focused .head {
  color: #ececec;
}

.head > svg,
.head > span,
.head > select,
.head > button {
  flex: none;
}

.logo {
  width: 18px;
  height: 18px;
  margin: 0 5px;
}

.dot {
  width: 16px;
  height: 16px;
  margin: 0 5px;
  border-radius: 50%;
  background: #008000;
}

.caret {
  width: 8px;
  height: 8px;
  margin: 0 6px;
}

.dot + .caret {
  margin: 0 3px;
}

.symbol {
  width: 159px;
  margin-left: 4px;
  font-size: 12px;
  white-space: nowrap;
}

.ic {
  width: 18px;
  height: 18px;
  margin: 0 2px 0 3px;
}

.symbol + .ic {
  margin: 0 7px 0 1px;
}

.tf {
  width: 60px;
}

.lots {
  width: 42px;
}

.range {
  width: 130px;
}

.far {
  margin-left: 21px;
}

.gear {
  margin: 0 9px 0 11px;
}

.tool {
  display: flex;
  align-items: center;
  gap: 3px;
  margin-left: 10px;
  font-size: 14px;
}

.tool + .tool {
  margin-left: 6px;
}

.tool svg {
  width: 18px;
  height: 18px;
}

.head h2 {
  flex: 1;
  margin: 0;
  padding-right: 14px;
  color: #8c8c8e;
  font-size: 14px;
  font-weight: 400;
  text-align: center;
}

.side .head h2 {
  padding-right: 0;
}

.focused .head h2 {
  color: #ddd;
}

.corner {
  align-self: flex-end;
  width: 6px;
  height: 6px;
  margin: 0 0 1px 12px;
}

.side .corner,
.lots + .caret + .corner {
  margin-left: 5px;
}

.x {
  width: 30px;
  height: 20px;
  color: #8a8a8c;
}

.x svg {
  width: 16px;
  height: 16px;
  vertical-align: middle;
}

.focused .x {
  color: #ccc;
}

.body {
  position: relative;
  display: flex;
  flex: 1;
  min-height: 0;
  padding-right: 2px;
}

.rail {
  display: flex;
  flex: none;
  flex-direction: column;
  align-items: center;
  width: 29px;
  margin-bottom: -27px;
  color: #b8b8ba;
}

.grip {
  flex: none;
  width: 20px;
  height: 6px;
  margin: 2px 0 3px;
}

.railgear {
  flex: none;
  width: 16px;
  height: 16px;
  margin: 5px 0 7px;
}

.modes {
  display: flex;
  flex: none;
  flex-direction: column;
  align-items: center;
  justify-content: space-between;
  height: 274px;
  color: #dcdcdc;
}

.modes svg {
  flex: none;
  width: 9px;
  height: 9px;
}

.modes span {
  line-height: 16px;
  writing-mode: vertical-rl;
}

.tools {
  display: flex;
  flex: 1;
  flex-direction: column;
  min-height: 0;
}

.tools button {
  flex: 1;
  width: 28px;
  min-height: 0;
  line-height: 0;
}

.tools svg {
  width: 17px;
  height: 17px;
}

.fold {
  flex: none;
  align-self: flex-start;
  width: 7px;
  height: 7px;
  margin: 7px 0 5px 3px;
}

.wide .fold {
  margin-top: auto;
}

.chart {
  display: flex;
  flex: 1;
  flex-direction: column;
  min-width: 0;
  min-height: 0;
}

.dark {
  background: #171b26;
}

.light {
  background: #ecebdf;
}

.plot {
  display: block;
  flex: 1;
  width: 100%;
  min-height: 0;
  font-family: 'Liberation Sans', Arial, sans-serif;
}

.plot text {
  dominant-baseline: central;
}

.t8 {
  font-family: 'Open Sans', sans-serif;
  font-size: 8px;
  font-weight: 600;
}

.t9 {
  font-size: 9px;
}

.t13 {
  font-size: 13px;
}

.t14 {
  font-size: 14px;
}

.t15 {
  font-size: 15px;
}

.mark {
  font-size: 8px;
}

.ui {
  font-family: 'Open Sans', sans-serif;
  font-size: 10px;
}

.timer {
  font-size: 36px;
}

.lotmenu {
  position: absolute;
  top: 184px;
  left: 257px;
  display: flex;
  flex-direction: column;
  align-items: flex-start;
  justify-content: space-around;
  width: 67px;
  height: 130px;
  padding-left: 2px;
  border-radius: 4px;
  background: #2c2f31;
  color: #e8e8e8;
  font-size: 14px;
  line-height: 20px;
}

.lotmenu b {
  align-self: center;
}

.study {
  display: flex;
  flex: none;
  height: 107px;
  color: #b0b0b3;
  font-family: 'Liberation Sans', Arial, sans-serif;
  font-size: 14px;
}

.narrow {
  height: 72px;
}

.stats,
.strips {
  width: 407px;
  border-collapse: collapse;
  table-layout: fixed;
  color: #fff;
}

.stats th {
  width: 97px;
  padding: 0 2px;
  border-bottom: 1px solid #3c3d42;
  background: #7c7f8b;
  font-weight: 400;
  text-align: left;
}

.stats td {
  padding: 0;
  border: 1px solid #22262c;
}

.stats td:nth-child(2) {
  width: 17px;
}

.stats td div {
  overflow: hidden;
  white-space: nowrap;
}

.strips {
  width: 304px;
  height: 72px;
  background: #000;
}

.strips th {
  width: 96px;
  padding: 0 2px;
  font-weight: 400;
  line-height: 17px;
  text-align: left;
  white-space: nowrap;
}

.strips td {
  height: 18px;
  padding: 0;
}

.strips svg {
  display: block;
  width: 100%;
  height: 17px;
}

.zero {
  display: flex;
  flex: 1;
  flex-direction: column;
  justify-content: space-between;
  padding-left: 119px;
  font-size: 15px;
}

.zero span:last-child {
  margin-bottom: -9px;
}

.narrow .zero {
  padding-left: 157px;
}

.times {
  display: flex;
  flex: none;
  height: 27px;
  align-items: center;
  padding-top: 4px;
  color: #b2b2b5;
  font-family: 'Liberation Sans', Arial, sans-serif;
  font-size: 15px;
}

.foottimes {
  justify-content: space-between;
  width: 407px;
  padding-left: 17px;
}

.rangetimes {
  justify-content: space-between;
  width: 315px;
}

.foot {
  display: flex;
  flex: none;
  align-items: center;
  height: 27px;
  padding-left: 29px;
  color: #e4e4e4;
  font-size: 14px;
}

.scroll {
  display: flex;
  flex: 1;
  align-items: center;
  height: 25px;
  padding: 0 17px 0 1px;
  background: #333337;
  color: #aaaaac;
}

.scroll svg {
  width: 11px;
  height: 11px;
}

.scroll span {
  width: 9px;
  height: 16px;
  margin: 0 5px 0 auto;
  background: #68686a;
}

.short {
  flex: none;
  width: 155px;
}

.cal {
  width: 54px;
  height: 25px;
  border-right: 1px solid #8c8c8e;
  border-left: 1px solid #8c8c8e;
  color: #a8a8aa;
  line-height: 0;
}

.cal svg {
  width: 17px;
  height: 17px;
}

.filler {
  flex: 1;
  align-self: stretch;
  margin-left: 13px;
  background: #1e1e1e;
}

.dom {
  width: 66px;
  margin: 0 16px 0 20px;
  white-space: nowrap;
}

.wide .dom {
  display: flex;
  align-items: center;
  gap: 4px;
  width: 118px;
  margin: 0 0 0 7px;
}

.dom svg {
  width: 15px;
  height: 15px;
}

.trade {
  width: 56px;
  margin-right: 8px;
  white-space: nowrap;
}

.depth .head h2 {
  flex: none;
  padding: 0;
}

.depth .x {
  margin-left: auto;
}

.qty,
.orders {
  display: flex;
  flex: none;
  height: 25px;
  margin: 5px 12px 0 8px;
  justify-content: flex-end;
  border: 1px solid #3a3a3e;
  background: #323235;
  color: #d8d8d8;
  font-size: 14px;
}

.orders {
  margin: 1px 7px 0 8px;
}

.qty button {
  width: 26px;
  border-right: 1px solid #3d3d41;
}

.qty .on {
  border: 2px solid #1173ae;
}

.pick {
  display: flex;
  flex: 1;
  align-items: center;
  min-width: 0;
}

.qty .pick {
  flex: none;
  width: 55px;
  padding-left: 10px;
}

.pick select {
  flex: 1;
  min-width: 0;
}

.pick svg {
  width: 9px;
  height: 9px;
  margin-right: 5px;
}

.gtc {
  flex: none;
  width: 69px;
  padding-left: 6px;
  border-right: 1px solid #444;
}

.exit {
  padding-right: 9px;
}

.exit select {
  padding-left: 94px;
  font-size: 14px;
}

.book {
  flex: none;
  height: 870px;
  margin: 0 8px 0 9px;
  overflow: hidden;
}

.book table {
  width: 341px;
  border-collapse: collapse;
  table-layout: fixed;
}

.w52 {
  width: 52px;
}

.w39 {
  width: 39px;
}

.w33 {
  width: 33px;
}

.w26 {
  width: 26px;
}

.w24 {
  width: 24px;
}

.w23 {
  width: 23px;
}

.w21 {
  width: 21px;
}

.book th {
  height: 24px;
  padding: 0;
  background: #1c2433;
  color: #c8ccd4;
  font-size: 11px;
  font-weight: 400;
}

.book th div,
.book td div {
  display: flex;
  position: relative;
  justify-content: center;
  overflow: hidden;
  line-height: 20px;
  white-space: nowrap;
}

.book tbody tr {
  height: 23px;
}

.book tbody tr:nth-child(4n) {
  height: 24px;
}

.book td {
  position: relative;
  padding: 0;
  border: 1px solid #8a8a8c;
  background: #e1e1e1;
  color: #fff;
  font-size: 14px;
  font-weight: 700;
}

.book .price {
  border-color: #000;
  background: #000;
}

.book .price div {
  justify-content: flex-end;
}

.book .traded {
  background: #bfbfbf;
}

.book .bid,
.book .bd {
  background: #00008b;
}

.book .off {
  background: #808080;
}

.book .mid {
  background: #1b2191;
}

.book .pale {
  background: #8aaed6;
}

.book .ad,
.book .ask {
  background: #8b0000;
}

.book .grey {
  background: #a3acba;
}

.book .notes {
  background: #b9d1a0;
}

.book td i {
  position: absolute;
  top: 0;
  bottom: 0;
}

.book .bid i {
  right: 0;
  background: #6b96ec;
}

.book .ask i {
  left: 0;
  background: #e57373;
}

.book .bd i {
  left: 50%;
  background: #6ea4ec;
}

.book .bd .neg {
  right: 50%;
  left: auto;
  background: #e57373;
}

.book .ad i {
  left: 50%;
  width: 1px;
  background: #a0a8e0;
}

.book .grey i {
  background: #b4bfe0;
}

.book .ad .neg {
  width: 2px;
  background: #d88088;
}

.book .delta {
  color: #111;
}

.book .best .ask {
  background: #f00;
}

.book .best .at,
.book .last .traded,
.book .last .delta {
  background: #fff;
}

.book .last .pnl {
  background: #ff0;
}

.book .last .price {
  background: #a0a0a0;
}

.book .last .bid {
  background: #00f;
}

.book .last .ad {
  background: #90262c;
}

.book .last .at {
  background: #00a400;
}

.book .last td {
  border-bottom: 2px solid #222;
}

.hit .delta {
  box-shadow: inset 3px 0 #118011;
}

.bookfoot {
  display: flex;
  flex: none;
  height: 23px;
  margin: 0 8px 0 9px;
  background: #1c2433;
  color: #c8ccd4;
  font-size: 11px;
}

.actions {
  display: flex;
  gap: 2px;
  margin: 2px 13px 0 9px;
  color: #e8e8e8;
}

.actions button {
  width: 24px;
  height: 24px;
  border: 1px solid #3b3b3f;
  line-height: 20px;
  white-space: nowrap;
}

.actions svg {
  width: 15px;
  height: 17px;
  vertical-align: middle;
}

.actions .reverse {
  width: 68px;
  margin-right: auto;
  color: #6c6c6e;
}

.actions .cancel {
  width: 67px;
}

.actions .flat {
  width: 34px;
  color: #5c5c5e;
  font-size: 11px;
}

.actions .oco {
  width: 33px;
}

.tapehead {
  display: flex;
  height: 21px;
  margin: 0 1px;
  border-bottom: 1px solid #48484b;
  background: #323235;
  color: #e4e4e4;
}

.tapehead span {
  flex: 1;
  font-size: 14px;
  line-height: 18px;
  text-align: center;
}

.tapehead i {
  width: 49px;
  margin-right: 20px;
  border-right: 1px solid #444;
  border-left: 1px solid #444;
}

.tapebody {
  display: grid;
  grid-template-rows: 156px 19px;
  grid-template-columns: 1fr 46px 19px;
  margin: 0 1px 0 4px;
  border-bottom: 1px solid #1c1c1c;
  background: #1e1e1e;
}

.speedcol,
.sidecol {
  display: flex;
  flex-direction: column;
}

.speedcol i {
  flex: 1;
  border-top: 1px solid rgb(20 30 60 / 20%);
}

.sidecol {
  padding-top: 20px;
  background: #181c28;
}

.sidecol i {
  flex: 85;
  background: #089981;
}

.sidecol i:first-child {
  flex: 50;
  background: #f4385d;
}

.vscroll,
.hscroll {
  display: flex;
  align-items: center;
  background: #333337;
  color: #aaaaac;
}

.vscroll {
  flex-direction: column;
  padding: 4px 0;
}

.vscroll svg,
.hscroll svg {
  flex: none;
  width: 10px;
  height: 10px;
}

.vscroll span {
  width: 12px;
  height: 9px;
  margin: 6px 0 auto;
  background: #68686a;
}

.hscroll {
  grid-column: 1 / 3;
  padding: 0 4px;
}

.hscroll span {
  width: 134px;
  height: 11px;
  margin: 0 auto 0 6px;
  background: #68686a;
}

.dock {
  position: relative;
  display: flex;
  flex-direction: column;
  min-height: 0;
}

.statpanel {
  flex: 1;
  border-bottom: 2px solid #0d74b4;
}

.live {
  margin-left: 5px;
  font-size: 14px;
}

.tabs {
  display: flex;
  flex: none;
  height: 28px;
  margin: 0 9px 0 10px;
  color: #dedede;
  font-size: 14px;
}

.tabs button {
  padding: 0 13px 2px;
}

.tabs.top {
  height: 27px;
  margin-top: 4px;
  padding-top: 6px;
}

.tabs.top button:last-child {
  margin: 0 auto;
}

.tabs:not(.top) button {
  margin-left: 2px;
}

.tabs:not(.top) button:last-child {
  margin-left: 34px;
}

.tabs:not(.top) .on {
  width: 88px;
  margin: 0 0 -1px;
  border: 1px solid #48484b;
  border-bottom: 0;
  background: #1e1e1e;
  color: #0e80cc;
  text-align: left;
  z-index: 1;
}

.tabbody {
  flex: 1;
  min-height: 0;
  margin: 0 9px 12px 10px;
  padding: 13px 14px 14px;
  border: 1px solid #48484b;
  background: #1e1e1e;
}

.grid {
  display: grid;
  grid-template-rows: minmax(0, 1fr) 19px;
  grid-template-columns: minmax(0, 1fr) 20px;
  height: 100%;
  border: 1px solid #434346;
  overflow: hidden;
  background: #333337;
}

.grid table {
  display: block;
  overflow: hidden;
  background: #1e1e1e;
  border-collapse: collapse;
  color: #d8d8d8;
  font-size: 14px;
}

.grid thead,
.grid tbody,
.grid tr {
  display: flex;
}

.grid tbody {
  flex-direction: column;
}

.grid thead {
  height: 36px;
  background: #333337;
  font-size: 15px;
  line-height: 34px;
}

.grid thead tr,
.grid th:first-child,
.grid td {
  flex: 1;
}

.grid th + th {
  width: 20px;
  border-left: 1px solid #434346;
}

.grid td {
  height: 27px;
  padding: 0 6px;
  border-bottom: 1px solid #434346;
  line-height: 24px;
}

.sel {
  background: #404043;
}

.grid .vscroll {
  padding: 40px 0 4px;
}

.grid .vscroll span {
  height: 38px;
  margin-top: 5px;
}

.grid .hscroll span {
  width: 79px;
}

.docktabs {
  display: flex;
  height: 27px;
  color: #e2e2e2;
  font-size: 14px;
}

.docktabs button {
  height: 25px;
  padding: 0 6px 2px;
}

.docktabs .on {
  background: #007acc;
}

.docktabs .add {
  width: 44px;
  border: 1px solid #3c3c40;
  line-height: 0;
}

.docktabs svg {
  width: 18px;
  height: 18px;
}

.badge {
  position: absolute;
  right: 0;
  bottom: 4px;
  width: 64px;
  border-radius: 16px;
  background: rgb(85 85 88 / 60%);
  color: #303032;
  font-size: 16px;
  font-weight: 700;
  line-height: 31px;
  text-align: center;
}

.strip {
  flex: none;
  height: 11px;
  border-top: 2px solid #252526;
  border-bottom: 1px solid #000;
  background: #3d3d3e;
}

.mk {
  position: absolute;
  width: 135px;
  height: 135px;
  border: 0 solid #27cd8d;
  pointer-events: none;
  z-index: 4;
}

.tl {
  top: 0;
  left: 0;
  border-width: 6px 0 0 6px;
}

.tr {
  top: 0;
  right: 0;
  border-width: 6px 6px 0 0;
}

.bl {
  bottom: 0;
  left: 0;
  border-width: 0 0 6px 6px;
}

.br {
  right: 0;
  bottom: 0;
  border-width: 0 6px 6px 0;
}

.pull {
  position: absolute;
  width: 33px;
  height: 34px;
  background: #1b1b1b;
  color: #eee;
  z-index: 5;
}

.pull.right {
  top: 135px;
  right: 0;
  border-radius: 17px 0 0 17px;
}

.pull.left {
  top: 859px;
  left: 0;
  width: 40px;
  border-radius: 0 17px 17px 0;
  background: rgb(25 25 25 / 65%);
}

.pull svg {
  width: 11px;
  height: 11px;
}
</style>
